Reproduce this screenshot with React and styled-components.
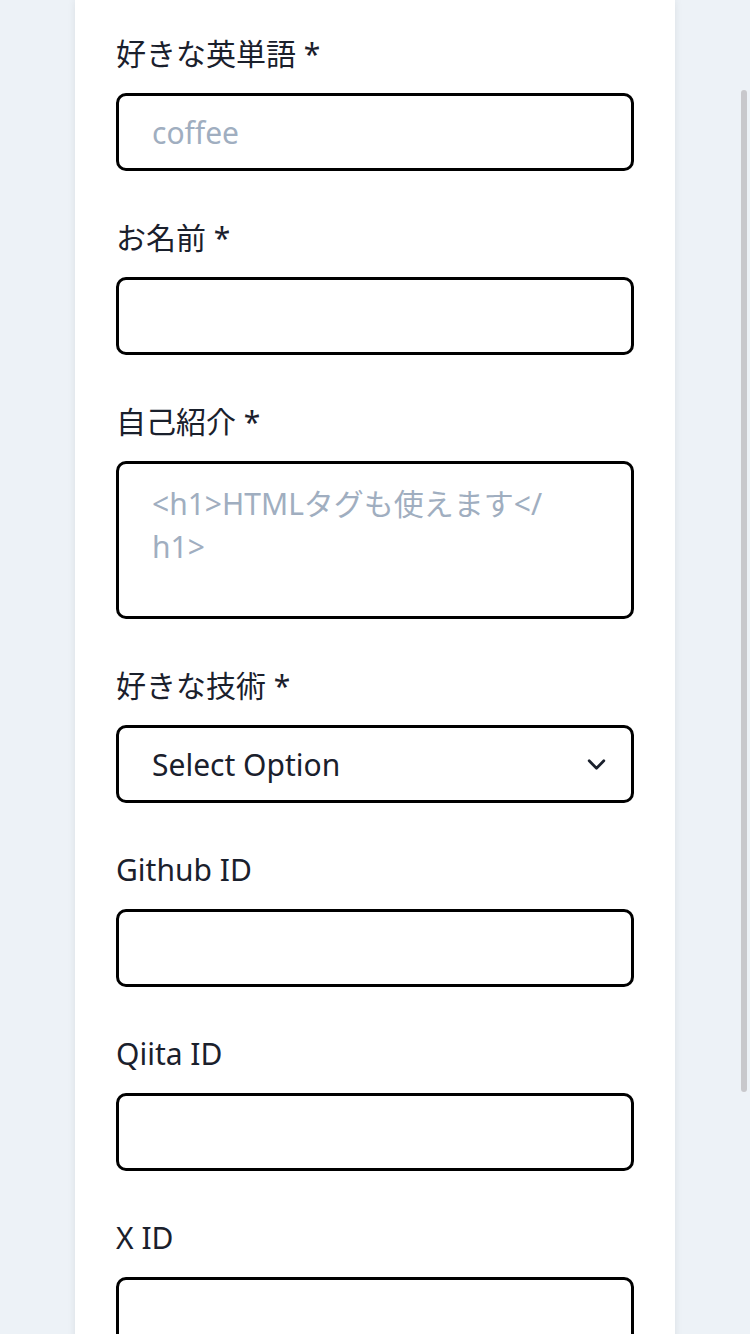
import styled, { createGlobalStyle } from 'styled-components';

const fields = [
  { label: '好きな英単語', required: true, type: 'input', placeholder: 'coffee' },
  { label: 'お名前', required: true, type: 'input' },
  { label: '自己紹介', required: true, type: 'textarea', placeholder: '<h1>HTMLタグも使えます</\u200Bh1>' },
  { label: '好きな技術', required: true, type: 'select' },
  { label: 'Github ID', type: 'input' },
  { label: 'Qiita ID', type: 'input' },
  { label: 'X ID', type: 'input' },
];

export default function App() {
  return (
    <>
      <GlobalStyle />
      <Page>
        <Card>
          {fields.map((f) => (
            <Field key={f.label}>
              <Label>
                {f.label}
                {f.required && ' *'}
              </Label>
              {f.type === 'input' && <TextInput placeholder={f.placeholder} />}
              {f.type === 'textarea' && <TextArea placeholder={f.placeholder} />}
              {f.type === 'select' && (
                <SelectWrap>
                  <Select defaultValue="">
                    <option value="">Select Option</option>
                  </Select>
                  <Chevron viewBox="0 0 20 12">
                    <path d="M2 2l8 8 8-8" />
                  </Chevron>
                </SelectWrap>
              )}
            </Field>
          ))}
        </Card>
        <ScrollThumb />
      </Page>
    </>
  );
}

const GlobalStyle = createGlobalStyle`
  html, body {
    margin: 0;
    padding: 0;
    background: #edf2f7;
    font-family: 'Noto Sans', 'Noto Sans CJK JP', sans-serif;
    color: #1a202c;
    overflow: hidden;
  }
  * {
    box-sizing: border-box;
  }
`;

const Page = styled.div`
  width: 750px;
  height: 1334px;
  overflow: hidden;
`;

const Card = styled.div`
  width: 600px;
  min-height: 1334px;
  margin: 0 auto;
  padding: 33px 41px 0;
  background: #fff;
  box-shadow: 0 0 8px rgba(0, 0, 0, 0.08);
  display: flex;
  flex-direction: column;
  gap: 46px;
`;

const Field = styled.div`
  display: flex;
  flex-direction: column;
`;

const Label = styled.label`
  font-size: 30px;
  line-height: 42px;
  margin-bottom: 18px;
`;

const boxStyle = `
  width: 100%;
  border: 3px solid #000;
  border-radius: 10px;
  background: #fff;
  font-family: 'Noto Sans', 'Noto Sans CJK JP', sans-serif;
  font-size: 30px;
  color: #1a202c;
  outline: none;
  &::placeholder {
    color: #a0aec0;
  }
`;

const TextInput = styled.input`
  ${boxStyle}
  height: 78px;
  padding: 0 33px;
`;

const TextArea = styled.textarea`
  ${boxStyle}
  height: 158px;
  padding: 18px 48px 18px 33px;
  line-height: 43px;
  resize: none;
`;

const SelectWrap = styled.div`
  position: relative;
`;

const Select = styled.select`
  ${boxStyle}
  height: 78px;
  padding: 0 33px;
  appearance: none;
`;

const Chevron = styled.svg`
  position: absolute;
  right: 28px;
  top: 34px;
  width: 19px;
  height: 11px;
  fill: none;
  stroke: #1a202c;
  stroke-width: 3;
  stroke-linecap: round;
  stroke-linejoin: round;
  pointer-events: none;
`;

const ScrollThumb = styled.div`
  position: fixed;
  left: 741px;
  top: 90px;
  width: 6px;
  height: 1002px;
  border-radius: 3px;
  background: #c8c8cc;
`;
